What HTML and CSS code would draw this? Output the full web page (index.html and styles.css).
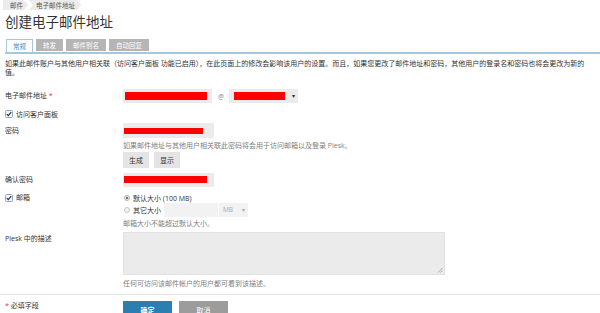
FILE: index.html
```html
<!DOCTYPE html>
<html lang="zh-CN">
<head>
<meta charset="utf-8">
<title>创建电子邮件地址</title>
<link rel="stylesheet" href="styles.css">
</head>
<body>
<div class="page">
  <div class="content">
    <nav class="crumbs">
      <span class="crumb first">邮件</span>
      <span class="crumb">电子邮件地址</span>
    </nav>
    <h1 class="title">创建电子邮件地址</h1>
    <div class="tabs">
      <span class="tab active">常规</span>
      <span class="tab">转发</span>
      <span class="tab">邮件别名</span>
      <span class="tab">自动回复</span>
    </div>
    <p class="intro">如果此邮件账户与其他用户相关联（访问客户面板 功能已启用），在此页面上的修改会影响该用户的设置。而且，如果您更改了邮件地址和密码，其他用户的登录名和密码也将会更改为新的值。</p>

    <div class="row r-email">
      <div class="label">电子邮件地址 <span class="req">*</span></div>
      <div class="field inline">
        <div class="input w-email"><span class="redact rd-email"></span></div>
        <span class="at">@</span>
        <div class="select w-domain"><span class="redact rd-domain"></span><span class="caret">▾</span></div>
      </div>
    </div>

    <div class="row r-check">
      <span class="check"><svg width="8" height="8" viewBox="0 0 8 8"><rect x="0.5" y="0.5" width="7" height="7" rx="1" fill="#f3f6fa" stroke="#8ea6c2"/><path d="M1.8 4.1 L3.3 5.6 L6.2 2.2" fill="none" stroke="#333" stroke-width="1.3"/></svg></span>
      <span class="check-text">访问客户面板</span>
    </div>

    <div class="row r-pass">
      <div class="label">密码</div>
      <div class="input w-pass"><span class="redact rd-pass"></span></div>
    </div>
    <div class="sub hint">如果邮件地址与其他用户相关联此密码将会用于访问邮箱以及登录 Plesk。</div>
    <div class="sub btns">
      <span class="btn">生成</span>
      <span class="btn">显示</span>
    </div>

    <div class="row r-confirm">
      <div class="label">确认密码</div>
      <div class="input w-pass"><span class="redact rd-confirm"></span></div>
    </div>

    <div class="row r-mailbox">
      <div class="label check-label">
        <span class="check"><svg width="8" height="8" viewBox="0 0 8 8"><rect x="0.5" y="0.5" width="7" height="7" rx="1" fill="#f3f6fa" stroke="#8ea6c2"/><path d="M1.8 4.1 L3.3 5.6 L6.2 2.2" fill="none" stroke="#333" stroke-width="1.3"/></svg></span>
        <span class="check-text">邮箱</span>
      </div>
      <div class="field stack">
        <div class="radio-line">
          <span class="radio on"></span>
          <span>默认大小 (100 MB)</span>
        </div>
        <div class="radio-line other">
          <span class="radio"></span>
          <span>其它大小</span>
          <div class="input w-size disabled"></div>
          <div class="select w-unit disabled"><span class="unit">MB</span><span class="caret light">▾</span></div>
        </div>
        <div class="hint mb-hint">邮箱大小不能超过默认大小。</div>
      </div>
    </div>

    <div class="row r-desc">
      <div class="label desc-label">Plesk 中的描述</div>
      <div class="textarea">
        <svg class="grip" width="6" height="6" viewBox="0 0 6 6"><path d="M5.5 1 L1 5.5 M5.5 3.5 L3.5 5.5" stroke="#999" stroke-width="0.8"/></svg>
      </div>
    </div>
    <div class="sub hint desc-hint">任何可访问该邮件帐户的用户都可看到该描述。</div>
  </div>

  <div class="footer">
    <div class="label foot-label"><span class="req">*</span> 必填字段</div>
    <span class="fbtn ok">确定</span>
    <span class="fbtn cancel">取消</span>
  </div>
</div>
</body>
</html>
```

FILE: styles.css
```css
html, body {
  margin: 0;
  padding: 0;
  background: #ffffff;
}

body {
  font-family: "Open Sans", "Noto Sans CJK SC", sans-serif;
  font-size: 7px;
  color: #333333;
  width: 600px;
  height: 313px;
  overflow: hidden;
}

.content {
  padding: 0 5px;
}

/* breadcrumbs */
.crumbs {
  display: flex;
  height: 10px;
  gap: 1px;
  margin-left: -2px;
}

.crumb {
  display: flex;
  align-items: center;
  height: 10px;
  font-size: 6.5px;
  color: #555555;
  background: #ebebeb;
  padding: 0 6px 0 7px;
  clip-path: polygon(0 0, calc(100% - 4px) 0, 100% 50%, calc(100% - 4px) 100%, 0 100%, 4px 50%);
}

.crumb.first {
  padding: 0 5px 0 7px;
  clip-path: polygon(0 0, calc(100% - 4px) 0, 100% 50%, calc(100% - 4px) 100%, 0 100%);
}

/* title */
.title {
  margin: 3px 0 0 0;
  font-size: 13.5px;
  line-height: 18px;
  font-weight: normal;
  color: #333333;
}

/* tabs */
.tabs {
  display: flex;
  gap: 3px;
  margin-top: 8px;
  margin-right: -5px;
  border-bottom: 2px solid #a4c8da;
  padding-left: 1px;
}

.tab {
  display: flex;
  align-items: center;
  height: 12px;
  padding: 0 7px;
  font-size: 6.5px;
  color: #ffffff;
  background: #b5b5b5;
}

.tab.active {
  background: #ffffff;
  color: #3b8dc2;
  border: 1px solid #a4c8da;
  border-bottom: none;
  padding: 0 6px;
}

/* intro */
.intro {
  margin: 5px 0 0 0;
  line-height: 9px;
  width: 590px;
}

/* form rows */
.row {
  display: flex;
  align-items: center;
}

.label {
  width: 118px;
  flex: none;
  line-height: 10px;
}

.req {
  color: #e53935;
}

.field.inline {
  display: flex;
  align-items: center;
}

.input,
.select {
  position: relative;
  background: #ebebeb;
  box-sizing: border-box;
}

.redact {
  position: absolute;
  background: #ff0000;
}

.r-email {
  margin-top: 12px;
  height: 14px;
}

.w-email {
  width: 89px;
  height: 14px;
}

.rd-email {
  left: 2px;
  top: 3px;
  width: 82px;
  height: 8px;
}

.at {
  margin: 0 5px 0 6px;
  color: #888888;
  font-size: 6.5px;
}

.w-domain {
  width: 69px;
  height: 14px;
}

.rd-domain {
  left: 5px;
  top: 3px;
  width: 51px;
  height: 8px;
}

.caret {
  position: absolute;
  right: 3px;
  top: 0;
  line-height: 14px;
  font-size: 6px;
  color: #333333;
}

.caret.light {
  color: #aaaaaa;
}

/* checkbox */
.r-check {
  margin-top: 6px;
  height: 9px;
}

.check {
  display: flex;
  width: 8px;
  height: 8px;
  margin-right: 3px;
}

.check-label {
  display: flex;
  align-items: center;
}

/* password */
.r-pass {
  margin-top: 5px;
  height: 15px;
}

.w-pass {
  width: 91px;
  height: 15px;
}

.rd-pass {
  left: 1px;
  top: 5px;
  width: 79px;
  height: 6px;
}

.sub {
  margin-left: 118px;
}

.hint {
  color: #808080;
  line-height: 9px;
}

.r-pass + .hint {
  margin-top: 3px;
}

.btns {
  display: flex;
  gap: 5px;
  margin-top: 2px;
}

.btn {
  display: flex;
  align-items: center;
  height: 16px;
  padding: 0 6px;
  background: #e4e4e4;
  color: #333333;
}

.r-confirm {
  margin-top: 5px;
  height: 14px;
}

.r-confirm .w-pass {
  height: 14px;
}

.rd-confirm {
  left: 1px;
  top: 3px;
  width: 83px;
  height: 7px;
}

/* mailbox */
.r-mailbox {
  margin-top: 6px;
  align-items: flex-start;
}

.field.stack {
  display: flex;
  flex-direction: column;
}

.radio-line {
  display: flex;
  align-items: center;
  height: 10px;
}

.radio-line.other {
  height: 14px;
}

.radio {
  width: 6px;
  height: 6px;
  border-radius: 50%;
  box-sizing: border-box;
  border: 1px solid #c4c4c4;
  background: #f4f4f4;
  margin: 0 3px 0 1px;
}

.radio.on {
  border-color: #b0b0b0;
  background: radial-gradient(circle, #777777 0 1.4px, #f0f0f0 1.6px);
}

.w-size {
  width: 54px;
  height: 14px;
  margin-left: 3px;
}

.disabled {
  background: #f2f2f2;
}

.w-unit {
  width: 29px;
  height: 14px;
  margin-left: 1px;
}

.unit {
  position: absolute;
  left: 4px;
  top: 0;
  line-height: 14px;
  color: #aaaaaa;
  font-size: 6.5px;
}

.mb-hint {
  margin-top: 2px;
}

/* description */
.r-desc {
  margin-top: 4px;
  align-items: flex-start;
}

.desc-label {
  padding-top: 2px;
}

.textarea {
  position: relative;
  width: 322px;
  height: 43px;
  background: #ebebeb;
  border: 1px solid #e2e2e2;
  box-sizing: border-box;
}

.grip {
  position: absolute;
  right: 1px;
  bottom: 1px;
}

.desc-hint {
  margin-top: 4px;
}

/* footer */
.footer {
  display: flex;
  align-items: flex-start;
  margin-top: 6px;
  border-top: 1px solid #e3e3e3;
  padding: 6px 5px 0 5px;
}

.foot-label {
  line-height: 10px;
}

.fbtn {
  display: flex;
  align-items: center;
  justify-content: center;
  width: 49px;
  height: 17px;
  color: #ffffff;
  font-weight: bold;
}

.fbtn.ok {
  background: #2a7fb0;
}

.fbtn.cancel {
  background: #9c9c9c;
  margin-left: 7px;
  font-weight: normal;
}
```
